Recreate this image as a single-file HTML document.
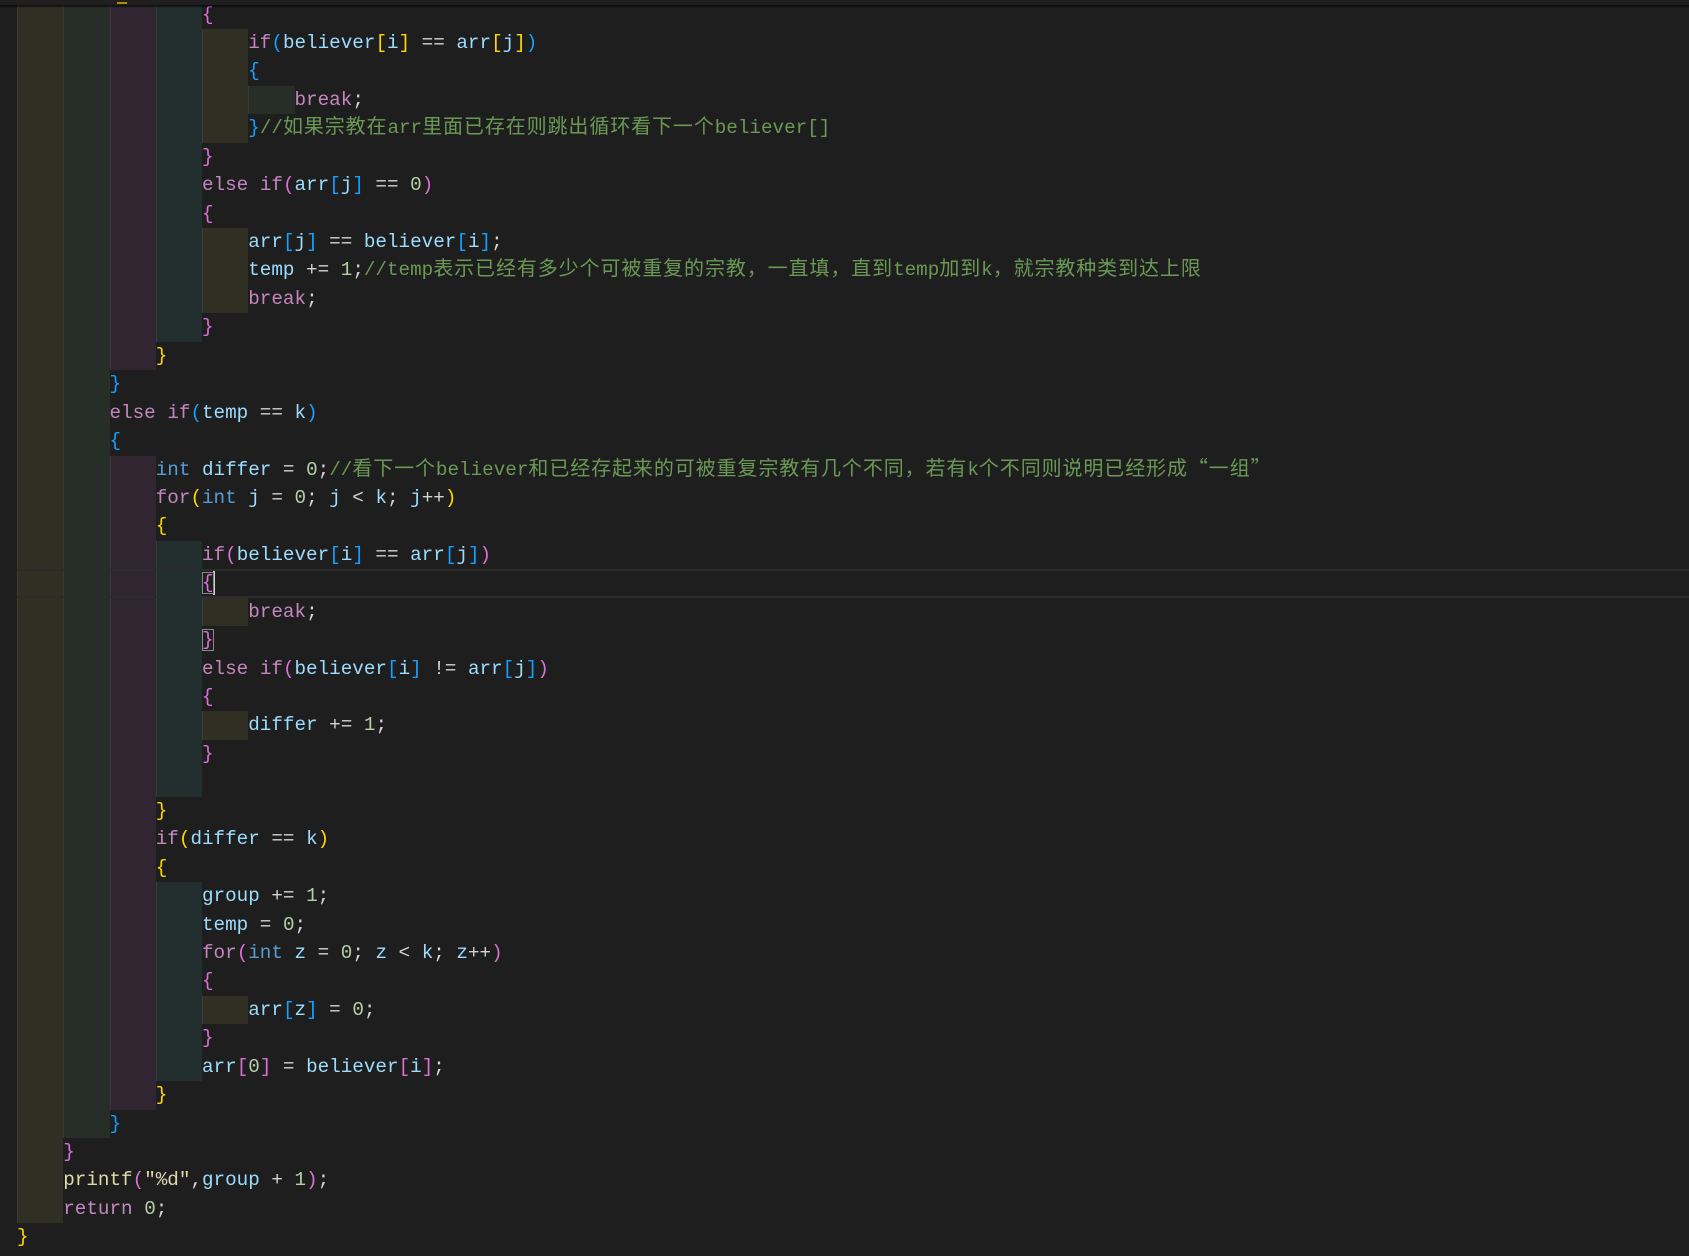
<!DOCTYPE html>
<html><head><meta charset="utf-8">
<style>
html,body{margin:0;padding:0;background:#1e1e1e;width:1689px;height:1256px;overflow:hidden}
#code{position:absolute;left:17px;top:0.5px;font-family:"Liberation Mono","Noto Sans CJK SC",monospace;font-size:19.27px;color:#d4d4d4;white-space:normal}
.l{height:28.45px;line-height:28.45px;position:relative;white-space:pre;overflow:visible}
.g{display:inline-block;box-sizing:border-box;width:46.25px;height:28.45px;vertical-align:top;border-left:1px solid rgba(255,255,255,0.07)}
.g0{background:#302f23}.g1{background:#262e27}.g2{background:#302531}.g3{background:#232f2f}
.k{color:#c586c0}.t{color:#569cd6}.v{color:#9cdcfe}.n{color:#b5cea8}.c{color:#6a9955}.f{color:#dcdcaa}.s{color:#e2d6b0}
.Y{color:#ffd700}.P{color:#da70d6}.B{color:#179fff}
.z{font-family:"Noto Sans CJK SC",sans-serif;font-size:20px;letter-spacing:0.9px;line-height:0}
.cur::after{content:"";position:absolute;left:0;width:1700px;top:0;height:28.45px;box-sizing:border-box;border-top:2px solid #2c2c2c;border-bottom:2px solid #2c2c2c;pointer-events:none}
.bx{outline:1px solid #8a8a8a;outline-offset:-1px}
.cursor{display:inline-block;width:2px;height:24px;background:#d0d0d0;vertical-align:middle;margin-left:-1px}
#top{position:absolute;left:0;top:0;width:1689px;height:5px;background:#1f1f1f;z-index:2}
#sh{position:absolute;left:0;top:5px;width:1689px;height:3px;background:linear-gradient(#0a0a0a,rgba(10,10,10,0));z-index:2}
</style></head><body>
<div id="top"><span style="position:absolute;left:117px;top:-2px;width:10px;height:4px;border-bottom:2px solid #b08a00"></span></div><div id="sh"></div>
<div id="code"><div class="l"><span class="g g0"></span><span class="g g1"></span><span class="g g2"></span><span class="g g3"></span><span class="P">{</span></div><div class="l"><span class="g g0"></span><span class="g g1"></span><span class="g g2"></span><span class="g g3"></span><span class="g g0"></span><span class="k">if</span><span class="B">(</span><span class="v">believer</span><span class="Y">[</span><span class="v">i</span><span class="Y">]</span> == <span class="v">arr</span><span class="Y">[</span><span class="v">j</span><span class="Y">]</span><span class="B">)</span></div><div class="l"><span class="g g0"></span><span class="g g1"></span><span class="g g2"></span><span class="g g3"></span><span class="g g0"></span><span class="B">{</span></div><div class="l"><span class="g g0"></span><span class="g g1"></span><span class="g g2"></span><span class="g g3"></span><span class="g g0"></span><span class="g g1"></span><span class="k">break</span>;</div><div class="l"><span class="g g0"></span><span class="g g1"></span><span class="g g2"></span><span class="g g3"></span><span class="g g0"></span><span class="B">}</span><span class="c">//<span class="z">如果宗教在</span>arr<span class="z">里面已存在则跳出循环看下一个</span>believer[]</span></div><div class="l"><span class="g g0"></span><span class="g g1"></span><span class="g g2"></span><span class="g g3"></span><span class="P">}</span></div><div class="l"><span class="g g0"></span><span class="g g1"></span><span class="g g2"></span><span class="g g3"></span><span class="k">else</span> <span class="k">if</span><span class="P">(</span><span class="v">arr</span><span class="B">[</span><span class="v">j</span><span class="B">]</span> == <span class="n">0</span><span class="P">)</span></div><div class="l"><span class="g g0"></span><span class="g g1"></span><span class="g g2"></span><span class="g g3"></span><span class="P">{</span></div><div class="l"><span class="g g0"></span><span class="g g1"></span><span class="g g2"></span><span class="g g3"></span><span class="g g0"></span><span class="v">arr</span><span class="B">[</span><span class="v">j</span><span class="B">]</span> == <span class="v">believer</span><span class="B">[</span><span class="v">i</span><span class="B">]</span>;</div><div class="l"><span class="g g0"></span><span class="g g1"></span><span class="g g2"></span><span class="g g3"></span><span class="g g0"></span><span class="v">temp</span> += <span class="n">1</span>;<span class="c">//temp<span class="z">表示已经有多少个可被重复的宗教，一直填，直到</span>temp<span class="z">加到</span>k<span class="z">，就宗教种类到达上限</span></span></div><div class="l"><span class="g g0"></span><span class="g g1"></span><span class="g g2"></span><span class="g g3"></span><span class="g g0"></span><span class="k">break</span>;</div><div class="l"><span class="g g0"></span><span class="g g1"></span><span class="g g2"></span><span class="g g3"></span><span class="P">}</span></div><div class="l"><span class="g g0"></span><span class="g g1"></span><span class="g g2"></span><span class="Y">}</span></div><div class="l"><span class="g g0"></span><span class="g g1"></span><span class="B">}</span></div><div class="l"><span class="g g0"></span><span class="g g1"></span><span class="k">else</span> <span class="k">if</span><span class="B">(</span><span class="v">temp</span> == <span class="v">k</span><span class="B">)</span></div><div class="l"><span class="g g0"></span><span class="g g1"></span><span class="B">{</span></div><div class="l"><span class="g g0"></span><span class="g g1"></span><span class="g g2"></span><span class="t">int</span> <span class="v">differ</span> = <span class="n">0</span>;<span class="c">//<span class="z">看下一个</span>believer<span class="z">和已经存起来的可被重复宗教有几个不同，若有</span>k<span class="z">个不同则说明已经形成“一组”</span></span></div><div class="l"><span class="g g0"></span><span class="g g1"></span><span class="g g2"></span><span class="k">for</span><span class="Y">(</span><span class="t">int</span> <span class="v">j</span> = <span class="n">0</span>; <span class="v">j</span> &lt; <span class="v">k</span>; <span class="v">j</span>++<span class="Y">)</span></div><div class="l"><span class="g g0"></span><span class="g g1"></span><span class="g g2"></span><span class="Y">{</span></div><div class="l"><span class="g g0"></span><span class="g g1"></span><span class="g g2"></span><span class="g g3"></span><span class="k">if</span><span class="P">(</span><span class="v">believer</span><span class="B">[</span><span class="v">i</span><span class="B">]</span> == <span class="v">arr</span><span class="B">[</span><span class="v">j</span><span class="B">]</span><span class="P">)</span></div><div class="l cur"><span class="g g0"></span><span class="g g1"></span><span class="g g2"></span><span class="g g3"></span><span class="P bx">{</span><span class="cursor"></span></div><div class="l"><span class="g g0"></span><span class="g g1"></span><span class="g g2"></span><span class="g g3"></span><span class="g g0"></span><span class="k">break</span>;</div><div class="l"><span class="g g0"></span><span class="g g1"></span><span class="g g2"></span><span class="g g3"></span><span class="P bx">}</span></div><div class="l"><span class="g g0"></span><span class="g g1"></span><span class="g g2"></span><span class="g g3"></span><span class="k">else</span> <span class="k">if</span><span class="P">(</span><span class="v">believer</span><span class="B">[</span><span class="v">i</span><span class="B">]</span> != <span class="v">arr</span><span class="B">[</span><span class="v">j</span><span class="B">]</span><span class="P">)</span></div><div class="l"><span class="g g0"></span><span class="g g1"></span><span class="g g2"></span><span class="g g3"></span><span class="P">{</span></div><div class="l"><span class="g g0"></span><span class="g g1"></span><span class="g g2"></span><span class="g g3"></span><span class="g g0"></span><span class="v">differ</span> += <span class="n">1</span>;</div><div class="l"><span class="g g0"></span><span class="g g1"></span><span class="g g2"></span><span class="g g3"></span><span class="P">}</span></div><div class="l"><span class="g g0"></span><span class="g g1"></span><span class="g g2"></span><span class="g g3"></span></div><div class="l"><span class="g g0"></span><span class="g g1"></span><span class="g g2"></span><span class="Y">}</span></div><div class="l"><span class="g g0"></span><span class="g g1"></span><span class="g g2"></span><span class="k">if</span><span class="Y">(</span><span class="v">differ</span> == <span class="v">k</span><span class="Y">)</span></div><div class="l"><span class="g g0"></span><span class="g g1"></span><span class="g g2"></span><span class="Y">{</span></div><div class="l"><span class="g g0"></span><span class="g g1"></span><span class="g g2"></span><span class="g g3"></span><span class="v">group</span> += <span class="n">1</span>;</div><div class="l"><span class="g g0"></span><span class="g g1"></span><span class="g g2"></span><span class="g g3"></span><span class="v">temp</span> = <span class="n">0</span>;</div><div class="l"><span class="g g0"></span><span class="g g1"></span><span class="g g2"></span><span class="g g3"></span><span class="k">for</span><span class="P">(</span><span class="t">int</span> <span class="v">z</span> = <span class="n">0</span>; <span class="v">z</span> &lt; <span class="v">k</span>; <span class="v">z</span>++<span class="P">)</span></div><div class="l"><span class="g g0"></span><span class="g g1"></span><span class="g g2"></span><span class="g g3"></span><span class="P">{</span></div><div class="l"><span class="g g0"></span><span class="g g1"></span><span class="g g2"></span><span class="g g3"></span><span class="g g0"></span><span class="v">arr</span><span class="B">[</span><span class="v">z</span><span class="B">]</span> = <span class="n">0</span>;</div><div class="l"><span class="g g0"></span><span class="g g1"></span><span class="g g2"></span><span class="g g3"></span><span class="P">}</span></div><div class="l"><span class="g g0"></span><span class="g g1"></span><span class="g g2"></span><span class="g g3"></span><span class="v">arr</span><span class="P">[</span><span class="n">0</span><span class="P">]</span> = <span class="v">believer</span><span class="P">[</span><span class="v">i</span><span class="P">]</span>;</div><div class="l"><span class="g g0"></span><span class="g g1"></span><span class="g g2"></span><span class="Y">}</span></div><div class="l"><span class="g g0"></span><span class="g g1"></span><span class="B">}</span></div><div class="l"><span class="g g0"></span><span class="P">}</span></div><div class="l"><span class="g g0"></span><span class="f">printf</span><span class="P">(</span><span class="s">"%d"</span>,<span class="v">group</span> + <span class="n">1</span><span class="P">)</span>;</div><div class="l"><span class="g g0"></span><span class="k">return</span> <span class="n">0</span>;</div><div class="l"><span class="Y">}</span></div></div>
</body></html>
